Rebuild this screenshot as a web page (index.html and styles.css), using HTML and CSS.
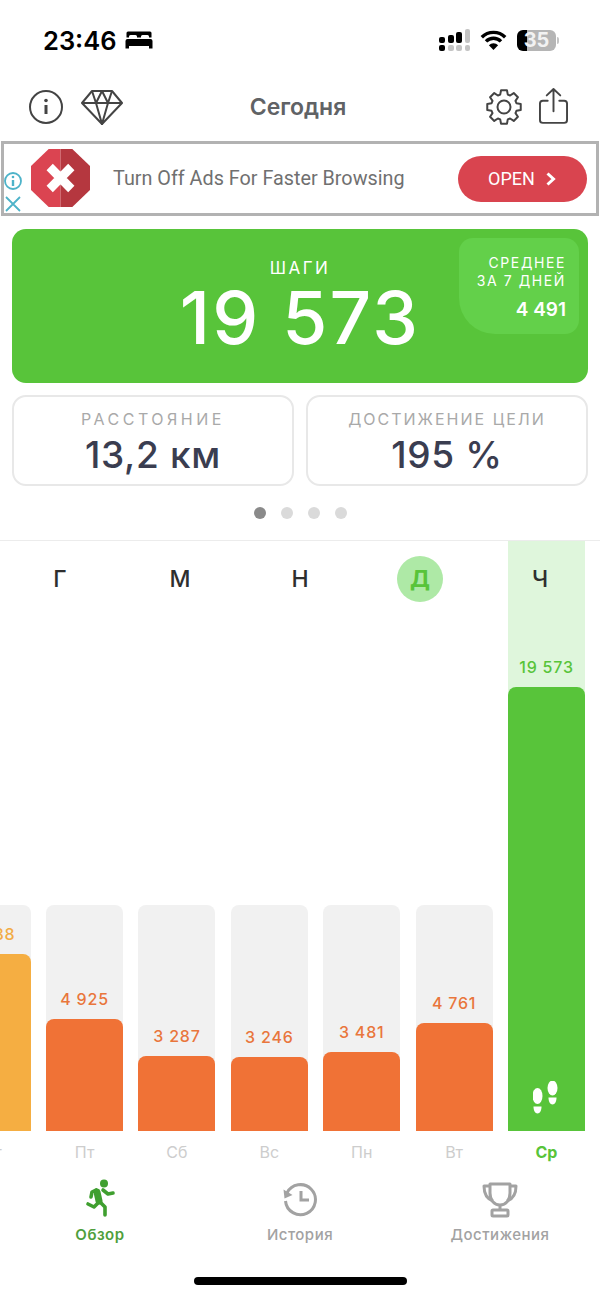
FILE: index.html
```html
<!DOCTYPE html>
<html lang="ru">
  <head>
    <meta charset="UTF-8" />
    <meta name="viewport" content="width=device-width, initial-scale=1.0" />
    <title>Сегодня</title>
    <link rel="stylesheet" href="styles.css">
  </head>
  <body>
    <div class="status-bar">
      <div class="status-left">
        <span class="clock">23:46</span>
        <svg width="28" height="20" viewBox="0 0 28 20">
          <path d="M3 1.500h22a1.500 1.500 0 0 1 1.500 1.500v4.500H24V6.500a1.500 1.500 0 0 0-1.500-1.500h-5A1.500 1.500 0 0 0 16 6.500v1h-4v-1A1.500 1.500 0 0 0 10.500 5h-5A1.500 1.500 0 0 0 4 6.500v1H1.500V3A1.500 1.500 0 0 1 3 1.500z" fill="#000"/>
          <path d="M2.500 9h23a2 2 0 0 1 2 2v7.500h-3.500V16H4v2.500H.5V11a2 2 0 0 1 2-2z" fill="#000"/>
        </svg>
      </div>
      <div class="status-right">
        <svg width="32" height="22" viewBox="0 0 32 22">
          <rect x="1" y="8" width="6" height="6" rx="2" fill="#000"/>
          <rect x="10" y="6" width="6" height="8" rx="2" fill="#000"/>
          <rect x="18" y="3" width="6" height="11" rx="2" fill="#000"/>
          <rect x="27" y="0" width="5" height="14" rx="2" fill="#c4c4c4"/>
          <rect x="1" y="16" width="6" height="6" rx="2" fill="#000"/>
          <rect x="10" y="16" width="6" height="6" rx="2" fill="#c4c4c4"/>
          <rect x="18" y="16" width="6" height="6" rx="2" fill="#c4c4c4"/>
          <rect x="27" y="16" width="5" height="6" rx="2" fill="#c4c4c4"/>
        </svg>
        <svg width="27" height="20" viewBox="0 0 27 20">
          <path d="M1.800 7.200a16.500 16.500 0 0 1 23.400 0M6 11.400a10.500 10.500 0 0 1 15 0" fill="none" stroke="#000" stroke-width="3.400"/>
          <path d="M13.500 20l-4.600-4.800a6.500 6.500 0 0 1 9.200 0z" fill="#000"/>
        </svg>
        <div class="battery">35</div>
      </div>
    </div>

    <div class="header">
      <div class="header-icons">
        <svg width="36" height="36" viewBox="0 0 36 36" fill="none" stroke="#444" stroke-width="2">
          <circle cx="18" cy="18" r="16"/>
          <path d="M18 16v9" stroke-width="3"/>
          <circle cx="18" cy="11.500" r="1.800" fill="#444" stroke="none"/>
        </svg>
        <svg width="42" height="36" viewBox="0 0 42 36" fill="none" stroke="#444" stroke-width="2" stroke-linejoin="round">
          <path d="M11 2h20l10 12-20 21L1 14z"/>
          <path d="M1 14h40M11 2l4 12 6-12 6 12 4-12M15 14l6 21 6-21"/>
        </svg>
      </div>
      <div class="title">Сегодня</div>
      <div class="header-icons right">
        <svg width="36" height="36" viewBox="-18 -18 36 36" fill="none" stroke="#444" stroke-width="2" stroke-linejoin="round">
          <polygon points="12.430,-3.800 16.740,-2.950 16.740,2.950 12.430,3.800 11.480,6.100 13.930,9.750 9.750,13.930 6.100,11.480 3.800,12.430 2.950,16.740 -2.950,16.740 -3.800,12.430 -6.100,11.480 -9.750,13.930 -13.930,9.750 -11.480,6.100 -12.430,3.800 -16.740,2.950 -16.740,-2.950 -12.430,-3.800 -11.480,-6.100 -13.930,-9.750 -9.750,-13.930 -6.100,-11.480 -3.800,-12.430 -2.950,-16.740 2.950,-16.740 3.800,-12.430 6.100,-11.480 9.750,-13.930 13.930,-9.750 11.480,-6.100"/>
          <circle r="6.500"/>
        </svg>
        <svg class="share" width="29" height="37" viewBox="0 0 30 38" fill="none" stroke="#444" stroke-width="2" stroke-linecap="round" stroke-linejoin="round">
          <path d="M9 14H4a3 3 0 0 0-3 3v17a3 3 0 0 0 3 3h22a3 3 0 0 0 3-3V17a3 3 0 0 0-3-3h-5"/>
          <path d="M15 25V2M8 8.500L15 2l7 6.500"/>
        </svg>
      </div>
    </div>

    <div class="ad">
      <div class="ad-marks">
        <svg width="20" height="20" viewBox="0 0 20 20" fill="none" stroke="#4db3c9" stroke-width="1.800">
          <circle cx="10" cy="10" r="8"/>
          <path d="M10 9v6" stroke-width="2.400"/>
          <circle cx="10" cy="6" r="1.300" fill="#4db3c9" stroke="none"/>
        </svg>
        <svg width="16" height="16" viewBox="0 0 16 16" fill="none" stroke="#4db3c9" stroke-width="1.800">
          <path d="M1 1l14 14M15 1L1 15"/>
        </svg>
      </div>
      <svg class="ad-logo" width="59" height="58" viewBox="0 0 60 58" preserveAspectRatio="none">
        <polygon points="18,0 30,0 30,58 18,58 0,41 0,17" fill="#db4451"/>
        <polygon points="30,0 42,0 60,17 60,41 42,58 30,58" fill="#b5373f"/>
        <path d="M19 18l22 22M41 18L19 40" stroke="#fff" stroke-width="9"/>
      </svg>
      <div class="ad-text">Turn Off Ads For Faster Browsing</div>
      <div class="ad-open">
        OPEN
        <svg width="12" height="14" viewBox="0 0 12 14" fill="none" stroke="#fff" stroke-width="3">
          <path d="M2.500 1.500L8.500 7l-6 5.500"/>
        </svg>
      </div>
    </div>

    <div class="steps-card">
      <div class="steps-label">ШАГИ</div>
      <div class="steps-value">19 573</div>
      <div class="average">
        <div class="average-label">СРЕДНЕЕ<br>ЗА 7 ДНЕЙ</div>
        <div class="average-value">4 491</div>
      </div>
    </div>

    <div class="stats">
      <div class="stat">
        <div class="stat-label wide">РАССТОЯНИЕ</div>
        <div class="stat-value">13,2 км</div>
      </div>
      <div class="stat">
        <div class="stat-label">ДОСТИЖЕНИЕ ЦЕЛИ</div>
        <div class="stat-value">195 %</div>
      </div>
    </div>

    <div class="dots">
      <span class="dot active"></span>
      <span class="dot"></span>
      <span class="dot"></span>
      <span class="dot"></span>
    </div>

    <div class="chart">
      <div class="col">
        <div class="track">
          <div class="amount yellow">7 788</div>
          <div class="bar bar-yellow" style="height: 177px"></div>
        </div>
        <div class="day">Чт</div>
      </div>
      <div class="col">
        <div class="track">
          <div class="amount">4 925</div>
          <div class="bar" style="height: 112px"></div>
        </div>
        <div class="day">Пт</div>
      </div>
      <div class="col">
        <div class="track">
          <div class="amount">3 287</div>
          <div class="bar" style="height: 75px"></div>
        </div>
        <div class="day">Сб</div>
      </div>
      <div class="col">
        <div class="track">
          <div class="amount">3 246</div>
          <div class="bar" style="height: 74px"></div>
        </div>
        <div class="day">Вс</div>
      </div>
      <div class="col">
        <div class="track">
          <div class="amount">3 481</div>
          <div class="bar" style="height: 79px"></div>
        </div>
        <div class="day">Пн</div>
      </div>
      <div class="col">
        <div class="track">
          <div class="amount">4 761</div>
          <div class="bar" style="height: 108px"></div>
        </div>
        <div class="day">Вт</div>
      </div>
      <div class="col today">
        <div class="track">
          <div class="amount">19 573</div>
          <div class="bar" style="height: 444px">
            <svg width="28" height="34" viewBox="0 0 28 34" fill="#fff">
              <ellipse cx="4.500" cy="15" rx="5" ry="8"/>
              <path d="M.5 25.500h8c0 4-1.500 7-4 7s-4-3-4-7z"/>
              <ellipse cx="19.500" cy="7" rx="5" ry="7.500"/>
              <path d="M15.500 16.500h8c0 4-1.500 7-4 7s-4-3-4-7z"/>
            </svg>
          </div>
        </div>
        <div class="day">Ср</div>
      </div>

      <div class="months">
        <span class="month">Г</span>
        <span class="month">М</span>
        <span class="month">Н</span>
        <span class="month current">Д</span>
        <span class="month">Ч</span>
      </div>
    </div>

    <div class="tabs">
      <div class="tab active">
        <svg width="36" height="40" viewBox="0 0 36 40" fill="none" stroke="#3f9f2f" stroke-width="3.600" stroke-linecap="round" stroke-linejoin="round">
          <circle cx="22" cy="4.500" r="4" fill="#3f9f2f" stroke="none"/>
          <path d="M15 13l2 9" stroke-width="7"/>
          <path d="M14 11l-4 2-1 5M21 11l5 4 5-1"/>
          <path d="M16 24l-4 4-6-3M18 23l5 5v8"/>
        </svg>
        <span>Обзор</span>
      </div>
      <div class="tab">
        <svg width="36" height="36" viewBox="0 0 36 36" fill="none" stroke="#a2a2a2" stroke-width="3">
          <path d="M5 12a15 15 0 1 1-1.500 8"/>
          <path d="M1.500 8.500l1 9 8-3.500z" fill="#a2a2a2" stroke="none"/>
          <path d="M19 10v9h8"/>
        </svg>
        <span>История</span>
      </div>
      <div class="tab">
        <svg width="36" height="36" viewBox="0 0 36 36" fill="none" stroke="#a2a2a2" stroke-width="3" stroke-linejoin="round">
          <path d="M8 3h20v9c0 7-4 12-10 12S8 19 8 12z"/>
          <path d="M8 5H2c0 8 3 13 9 15M28 5h6c0 8-3 13-9 15"/>
          <path d="M18 24v5"/>
          <rect x="10" y="29" width="16" height="6" rx="1"/>
        </svg>
        <span>Достижения</span>
      </div>
    </div>

    <div class="home-bar"></div>
  </body>
</html>
```

FILE: styles.css
```css
body {
  font-family: Inter, "Noto Sans", sans-serif;
  margin: 0;
  width: 600px;
  height: 1297px;
  overflow: hidden;
  background-color: #fff;
}
.status-bar {
  height: 72px;
  padding: 8px 44px 0 43px;
  display: flex;
  justify-content: space-between;
  align-items: center;
  box-sizing: border-box;
}
.status-left {
  display: flex;
  align-items: center;
  gap: 8px;
}
.clock {
  font-size: 25.500px;
  font-weight: 600;
  color: #000;
}
.status-right {
  display: flex;
  align-items: center;
  gap: 10px;
}
.battery {
  width: 39px;
  height: 21px;
  border-radius: 6px;
  background: linear-gradient(to right, #000 26%, #b5b5b5 26%);
  color: #f2f2f2;
  font-size: 20px;
  font-weight: 700;
  line-height: 21px;
  text-align: center;
  position: relative;
}
.battery::after {
  content: "";
  position: absolute;
  top: 7px;
  right: -3px;
  width: 2px;
  height: 7px;
  border-radius: 0 2px 2px 0;
  background-color: #c4c4c4;
}
.header {
  height: 69px;
  padding: 0 32px 0 28px;
  display: flex;
  justify-content: space-between;
  align-items: center;
  box-sizing: border-box;
}
.header-icons {
  flex: 1;
  display: flex;
  align-items: center;
  gap: 17px;
}
.header-icons.right {
  justify-content: flex-end;
}
.share {
  margin-bottom: 3px;
}
.title {
  font-size: 23px;
  font-weight: 600;
  color: #606265;
}
.ad {
  width: 598px;
  height: 75px;
  margin-left: 1px;
  border: 3px solid #b2b2b2;
  box-sizing: border-box;
  display: flex;
  align-items: center;
}
.ad-marks {
  width: 19px;
  margin-left: -1px;
  align-self: flex-end;
  display: flex;
  flex-direction: column;
  align-items: center;
  gap: 5px;
  padding-bottom: 1px;
}
.ad-logo {
  margin-left: 9px;
  margin-bottom: 2px;
  flex: none;
}
.ad-text {
  font-family: Roboto, sans-serif;
  font-size: 19.800px;
  color: #707070;
  margin-left: 23px;
  white-space: nowrap;
  flex: 1;
}
.ad-open {
  width: 129px;
  height: 46px;
  margin-right: 9px;
  border-radius: 23px;
  background-color: #d9444f;
  color: #fff;
  font-family: Roboto, sans-serif;
  font-size: 18px;
  font-weight: 400;
  display: flex;
  justify-content: center;
  align-items: center;
  gap: 10px;
}
.steps-card {
  margin: 13px 12px 0;
  height: 154px;
  border-radius: 14px;
  background-color: #58c43a;
  color: #fff;
  text-align: center;
  position: relative;
  box-sizing: border-box;
  padding-top: 29px;
}
.steps-label {
  font-size: 17px;
  letter-spacing: 2.500px;
  line-height: 20px;
}
.steps-value {
  font-size: 73px;
  font-weight: 500;
  line-height: 76px;
  letter-spacing: 2.200px;
  margin-top: 2px;
}
.average {
  position: absolute;
  top: 9px;
  right: 9px;
  width: 120px;
  height: 96px;
  border-radius: 14px 14px 14px 36px;
  background-color: #63d04a;
  box-sizing: border-box;
  padding: 16px 13px 0 0;
  text-align: right;
}
.average-label {
  font-size: 14px;
  letter-spacing: 1.600px;
  line-height: 18px;
}
.average-value {
  font-size: 19px;
  font-weight: 600;
  margin-top: 8px;
}
.stats {
  margin: 12px 12px 0;
  display: grid;
  grid-template-columns: 1fr 1fr;
  gap: 12px;
}
.stat {
  height: 91px;
  border: 2px solid #e8e8e8;
  border-radius: 14px;
  box-sizing: border-box;
  text-align: center;
  padding-top: 12px;
}
.stat-label {
  font-size: 16px;
  letter-spacing: 2px;
  line-height: 20px;
  color: #a9a9a9;
}
.stat-label.wide {
  letter-spacing: 3.500px;
}
.stat-value {
  font-size: 37px;
  font-weight: 500;
  line-height: 50px;
  letter-spacing: 0.700px;
  margin-top: 1px;
  color: #3a3d50;
}
.dots {
  height: 54px;
  display: flex;
  justify-content: center;
  align-items: center;
  gap: 15px;
  box-sizing: border-box;
}
.dot {
  width: 12px;
  height: 12px;
  border-radius: 50%;
  background-color: #dadada;
}
.dot.active {
  background-color: #8a8a8a;
}
.chart {
  height: 634px;
  border-top: 1px solid #ececec;
  box-sizing: border-box;
  padding-right: 15px;
  display: flex;
  justify-content: flex-end;
  align-items: flex-end;
  gap: 15.400px;
  position: relative;
  overflow: hidden;
}
.col {
  flex: none;
  width: 77px;
}
.track {
  height: 226px;
  border-radius: 8px 8px 0 0;
  background-color: #f1f1f1;
  display: flex;
  flex-direction: column;
  justify-content: flex-end;
}
.amount {
  font-size: 16px;
  font-weight: 500;
  letter-spacing: 0.800px;
  line-height: 20px;
  margin-bottom: 10px;
  text-align: center;
  white-space: nowrap;
  color: #e9763c;
}
.amount.yellow {
  color: #f2ab45;
}
.bar {
  border-radius: 8px 8px 0 0;
  background-color: #f07236;
}
.bar-yellow {
  background-color: #f5ae42;
}
.day {
  height: 43px;
  padding-top: 11px;
  box-sizing: border-box;
  font-size: 16px;
  line-height: 20px;
  text-align: center;
  color: #cdcdcd;
}
.today .track {
  height: 590px;
  border-radius: 0;
  background-color: #dff6dc;
}
.today .amount {
  color: #58c43a;
}
.today .bar {
  background-color: #58c43a;
  display: flex;
  justify-content: center;
  align-items: flex-end;
  padding-bottom: 16px;
  box-sizing: border-box;
}
.today .day {
  color: #58c43a;
  font-weight: 700;
}
.months {
  position: absolute;
  top: 0;
  left: 0;
  right: 0;
  height: 76px;
  display: grid;
  grid-template-columns: repeat(5, 1fr);
  align-items: center;
  justify-items: center;
}
.month {
  width: 46px;
  height: 46px;
  border-radius: 50%;
  font-size: 23px;
  font-weight: 500;
  line-height: 46px;
  text-align: center;
  color: #2e2e2e;
}
.month.current {
  background-color: #aee9a6;
  color: #58c43a;
  font-weight: 700;
}
.tabs {
  display: grid;
  grid-template-columns: repeat(3, 200px);
  height: 86px;
}
.tab {
  display: flex;
  flex-direction: column;
  align-items: center;
  padding-top: 5px;
  box-sizing: border-box;
  font-size: 15px;
  font-weight: 500;
  letter-spacing: 0.500px;
  color: #a2a2a2;
}
.tab svg {
  height: 40px;
}
.tab span {
  margin-top: 6px;
  line-height: 20px;
}
.tab.active {
  color: #4f9f3d;
  font-weight: 600;
}
.home-bar {
  width: 213px;
  height: 8px;
  margin: 17px auto 0;
  border-radius: 4px;
  background-color: #000;
}
```
